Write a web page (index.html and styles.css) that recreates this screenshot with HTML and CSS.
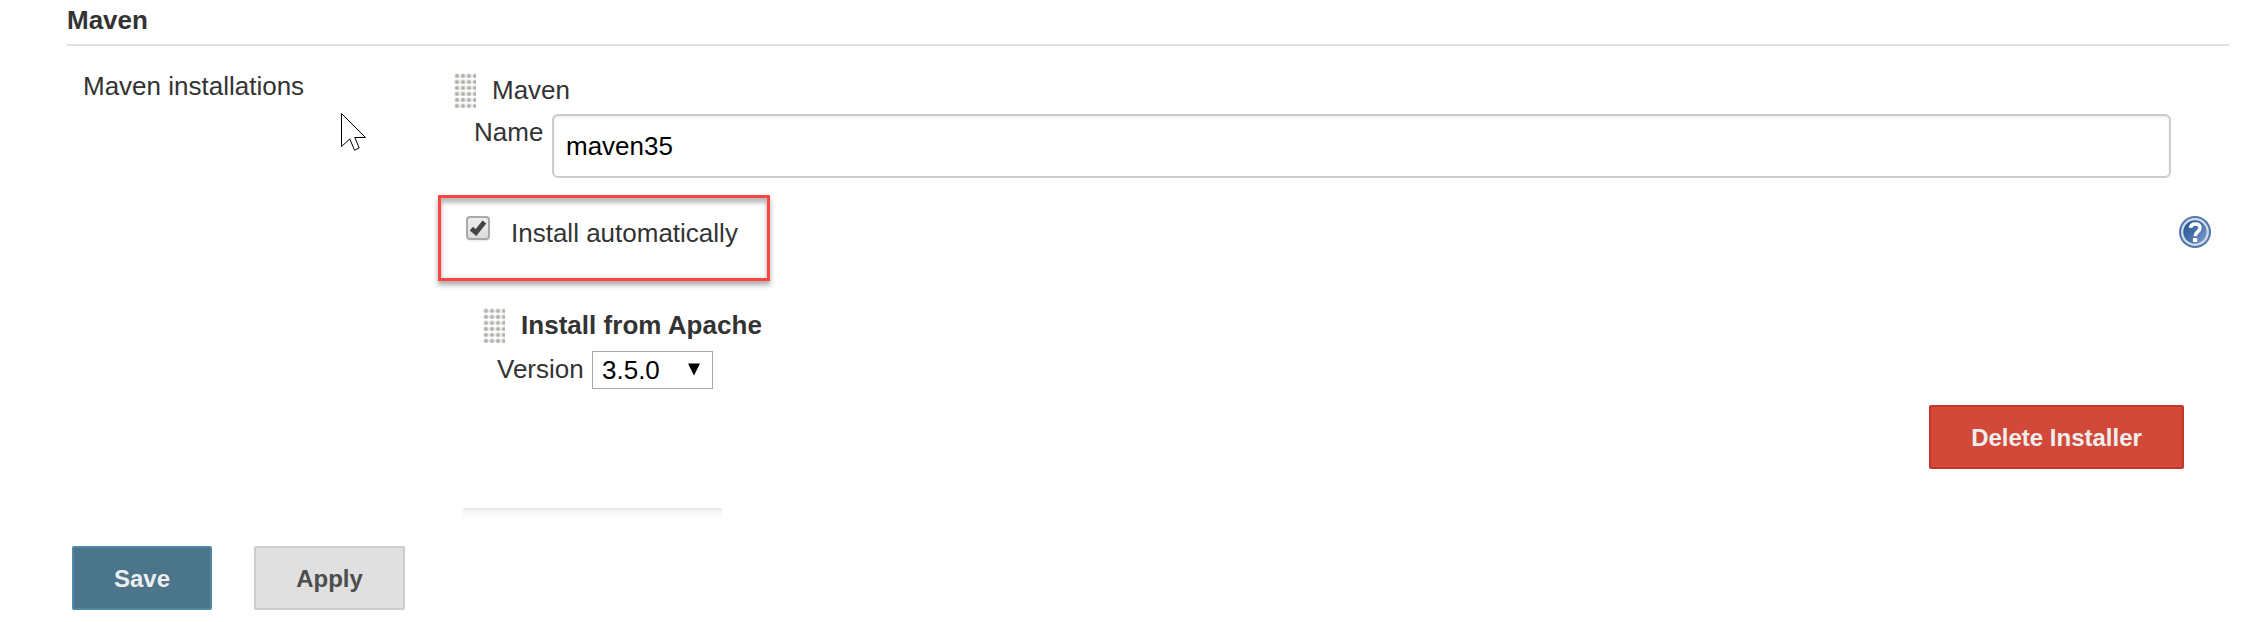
FILE: index.html
```html
<!DOCTYPE html>
<html lang="en">
<head>
<meta charset="utf-8">
<title>Maven configuration</title>
<link rel="stylesheet" href="styles.css">
</head>
<body>
<main class="page">
  <h2 class="section-title">Maven</h2>
  <div class="section">
    <div class="section-label">Maven installations</div>
    <div class="fields">
      <div class="item-head"><span class="grip"></span><span class="maven-label">Maven</span></div>
      <div class="name-row"><label class="name-label" for="name">Name</label><input class="name-input" id="name" type="text" value="maven35"></div>
      <div class="auto-row">
        <label class="highlight">
          <svg class="check" viewBox="0 0 24 26">
            <defs><linearGradient id="cb" x1="0" y1="0" x2="0" y2="1"><stop offset="0" stop-color="#eee"/><stop offset="1" stop-color="#dcdcdc"/></linearGradient></defs>
            <rect x="0.5" y="2" width="23" height="23.5" rx="4" fill="#eee"/>
            <rect x="1" y="1" width="22" height="22" rx="3" fill="url(#cb)" stroke="#aaa" stroke-width="2"/>
            <path d="M5.4 12.6 10 16.6 18.4 6" fill="none" stroke="#444" stroke-width="4.8"/>
          </svg>
          <span class="auto-label">Install automatically</span>
        </label>
        <svg class="help" viewBox="0 0 32 32">
          <defs><linearGradient id="hp" x1="0" y1="0.2" x2="1" y2="0.9"><stop offset="0" stop-color="#2a5796"/><stop offset="0.5" stop-color="#4872aa"/><stop offset="1" stop-color="#86a4cf"/></linearGradient></defs>
          <circle cx="16" cy="16" r="16" fill="#5478aa"/>
          <circle cx="16" cy="16" r="12.8" fill="url(#hp)" stroke="#d3deec" stroke-width="2.2"/>
          <path d="M11.6 11.8C11.8 9 13.4 7.9 16.2 7.9c3 0 4.8 1.5 4.8 4 0 3.8-4.8 3.8-4.8 8.4" fill="none" stroke="#fff" stroke-width="3.5"/>
          <rect x="13.9" y="22" width="4.4" height="4" rx="0.8" fill="#fff"/>
        </svg>
      </div>
      <div class="installer">
        <div class="item-head"><span class="grip"></span><strong class="installer-title">Install from Apache</strong></div>
        <div class="version-row">
          <span class="version-label">Version</span>
          <div class="select"><span>3.5.0</span><svg class="arrow" viewBox="0 0 12 13"><path d="M0 .5h12L6 12.5z"/></svg></div>
        </div>
      </div>
      <div class="delete-row"><button class="btn btn-danger">Delete Installer</button></div>
      <div class="faded-button"></div>
    </div>
  </div>
  <div class="footer"><button class="btn btn-save">Save</button><button class="btn btn-apply">Apply</button></div>
</main>
<svg class="cursor" viewBox="0 0 27 40"><path d="M1.5 1.5 25.5 25.5H14.8L19.2 36 14.5 38.2 9.8 27 1.5 34.5z" fill="#fff" stroke="#000" stroke-width="1"/></svg>
</body>
</html>
```
FILE: styles.css
```css
* { box-sizing: border-box; }
body {
  margin: 0;
  background: #fff;
  color: #333;
  font: 26px/30px "Liberation Sans", Arial, sans-serif;
}
.page { height: 622px; padding: 5px 31px 0 67px; overflow: hidden; }
.section-title {
  margin: 0;
  height: 41px;
  border-bottom: 2px solid #e0e0e0;
  font-size: 26px;
  line-height: 30px;
}
.section { display: flex; height: 500px; padding-top: 25px; }
.section-label { width: 371px; padding-left: 16px; }
.fields { flex: 1; }
.item-head { display: flex; gap: 16px; height: 37px; padding-left: 16px; }
.grip {
  width: 22px;
  height: 36px;
  margin-top: 1px;
  background: radial-gradient(circle at 3px 4px, #b0b0ab 0 1px, #fff 3.2px) 0 0 / 6px 6px;
}
.maven-label { padding-top: 4px; }
.name-row { display: flex; height: 88px; padding: 6px 58px 0 36px; }
.name-label { width: 78px; padding-top: 3px; }
.name-input {
  flex: 1;
  height: 64px;
  padding: 0 12px;
  border: 2px solid #ccc;
  border-radius: 6px;
  background: #fff;
  box-shadow: inset 0 2px 3px #eee;
  color: #000;
  font: inherit;
}
.auto-row { display: flex; justify-content: space-between; height: 110px; padding: 0 18px 0 0; margin-top: -1px; }
.highlight {
  display: flex;
  gap: 21px;
  width: 332px;
  height: 86px;
  padding: 18px 0 0 25px;
  border: 3px solid #ff4444;
  box-shadow: 0 4px 5px #aaa, inset 0 5px 4px #bbb, inset 0 0 3px #ccc;
}
.check { width: 24px; height: 26px; }
.auto-label { padding-top: 2px; white-space: nowrap; }
.help { width: 32px; height: 32px; margin-top: 21px; }
.installer { padding: 1px 0 0 29px; }
.installer-title { padding-top: 4px; letter-spacing: 0.03px; }
.version-row { display: flex; padding: 8px 0 0 30px; }
.version-label { width: 95px; padding-top: 3px; }
.select {
  display: flex;
  justify-content: space-between;
  width: 121px;
  height: 38px;
  padding: 3px 12px 0 9px;
  border: 1px solid #a9a9a9;
  color: #000;
}
.arrow { width: 12px; height: 13px; margin-top: 8px; }
.btn {
  height: 64px;
  padding: 0;
  border: 2px solid;
  border-radius: 2px;
  font: bold 24px/27px "Liberation Sans", Arial, sans-serif;
}
.delete-row { display: flex; justify-content: flex-end; padding: 16px 45px 0 0; }
.btn-danger { width: 255px; background: #d24939; border-color: #c03728; color: #eee; }
.faded-button {
  width: 259px;
  height: 11px;
  margin: 39px 0 0 25px;
  border-top: 2px solid #e9e9e9;
  border-radius: 2px;
  background: linear-gradient(#f3f3f3, #fff);
}
.footer { display: flex; gap: 42px; padding-left: 5px; }
.btn-save { width: 140px; background: #4b758b; border-color: #5289a2; color: #eee; }
.btn-apply { width: 151px; background: #e0e0e0; border-color: #ccc; color: #4d4d4d; }
.cursor { position: absolute; left: 340px; top: 112px; width: 27px; height: 40px; }
```
